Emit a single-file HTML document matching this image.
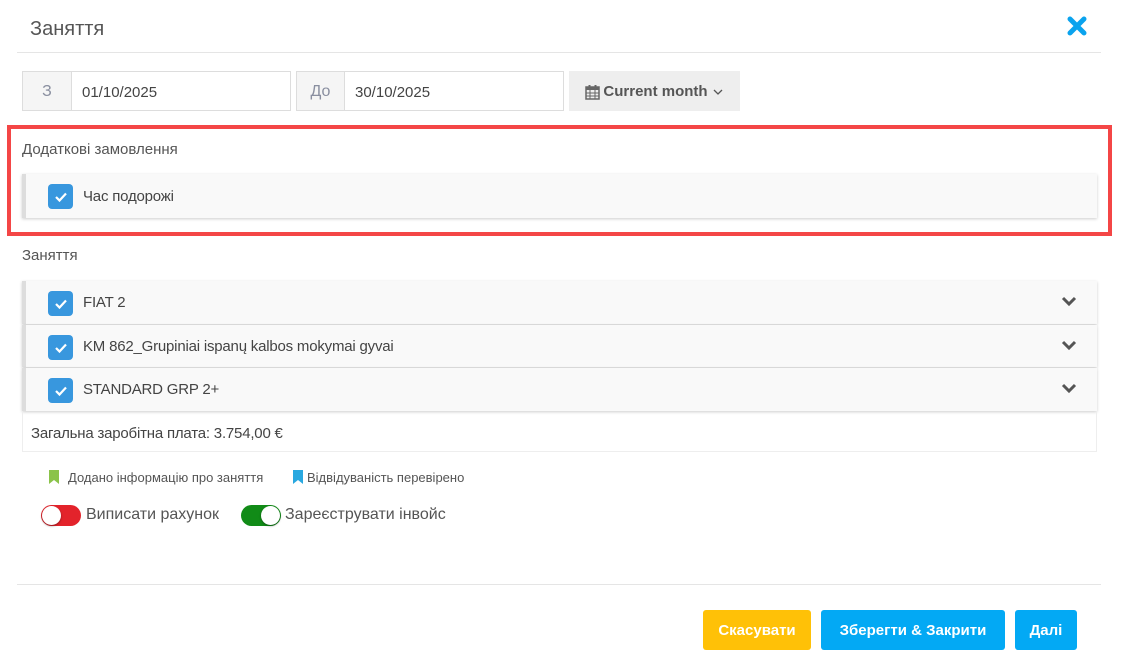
<!DOCTYPE html>
<html><head><meta charset="utf-8"><style>
*{box-sizing:border-box;margin:0;padding:0}
body{width:1121px;height:669px;background:#fff;font-family:"Liberation Sans",sans-serif;color:#555;position:relative;overflow:hidden}
.a{position:absolute}
.hr{position:absolute;left:17px;width:1084px;height:1px;background:#e5e5e5}
.addon{position:absolute;top:71px;height:40px;border:1px solid #ddd;background:#f5f5f5;color:#8a8fa0;font-size:16px;display:flex;align-items:center;justify-content:center;padding-top:2px}
.inp{position:absolute;top:71px;height:40px;border:1px solid #ddd;border-left:none;background:#fff;font-size:15px;color:#444;padding-left:10px;display:flex;align-items:center;padding-top:2px}
.panel{position:absolute;left:22px;width:1075px;background:#f9f9f9;border-left:4px solid #ddd;box-shadow:0 1px 3px rgba(0,0,0,.2);font-size:15px;color:#444}
.cb{position:absolute;left:22px;width:25px;height:25px;border-radius:4px;background:#3897de;display:flex;align-items:center;justify-content:center}
.lbl{position:absolute;left:57px;font-size:15px;color:#444;letter-spacing:-0.2px}
.chev{position:absolute;right:20px}
.btn{position:absolute;top:610px;height:40px;border-radius:3px;color:#fff;font-weight:bold;font-size:15px;display:flex;align-items:center;justify-content:center}
.tg{position:absolute;top:505px;width:40px;height:21px;border-radius:11px}
.tg i{position:absolute;top:1px;width:19px;height:19px;border-radius:50%;background:#fff;box-shadow:0 1px 2px rgba(0,0,0,.4)}
</style></head><body>
<div class="a" style="left:30px;top:18px;font-size:20px;color:#555">Заняття</div>
<svg class="a" style="left:1066px;top:15px" width="22" height="22" viewBox="0 0 22 22"><path d="M4 4L18 18M18 4L4 18" stroke="#0aa3ee" stroke-width="5" stroke-linecap="round"/></svg>
<div class="hr" style="top:52px"></div>

<div class="addon" style="left:22px;width:50px">З</div>
<div class="inp" style="left:72px;width:219px">01/10/2025</div>
<div class="addon" style="left:296px;width:49px">До</div>
<div class="inp" style="left:345px;width:219px">30/10/2025</div>
<div class="a" style="left:569px;top:71px;width:171px;height:40px;background:#eee;display:flex;align-items:center;justify-content:center;font-weight:bold;font-size:15px;color:#555;padding-top:1px">
<svg width="15" height="16" viewBox="0 0 15 16" style="margin-right:3px"><rect x="1" y="3" width="13" height="12" fill="none" stroke="#666" stroke-width="1.5"/><rect x="1" y="3" width="13" height="3" fill="#666"/><path d="M1 9h13M1 12h13M5 6v9M10 6v9" stroke="#666" stroke-width="1"/><rect x="3.5" y="1" width="2" height="4" fill="#666"/><rect x="9.5" y="1" width="2" height="4" fill="#666"/></svg>Current month<svg width="12" height="8" viewBox="0 0 12 8" style="margin-left:4px"><path d="M2 2l4 4 4-4" fill="none" stroke="#555" stroke-width="1.3"/></svg></div>

<div class="a" style="left:7px;top:125px;width:1105px;height:111px;border:4px solid #f44646"></div>
<div class="a" style="left:22px;top:141px;font-size:15px;color:#555">Додаткові замовлення</div>
<div class="panel" style="top:174px;height:44px">
<div class="cb" style="top:10px"><svg width="14" height="12" viewBox="0 0 14 12"><path d="M2 6l3.5 3.5L12 2.5" fill="none" stroke="#fff" stroke-width="2.2"/></svg></div>
<div class="lbl" style="top:14px">Час подорожі</div></div>

<div class="a" style="left:22px;top:247px;font-size:15px;color:#555">Заняття</div>
<div class="panel" style="top:281px;height:43px">
<div class="cb" style="top:10px"><svg width="14" height="12" viewBox="0 0 14 12"><path d="M2 6l3.5 3.5L12 2.5" fill="none" stroke="#fff" stroke-width="2.2"/></svg></div>
<div class="lbl" style="top:13px">FIAT 2</div>
<svg class="chev" style="top:15px" width="16" height="11" viewBox="0 0 16 11"><path d="M2 2l6 6 6-6" fill="none" stroke="#555" stroke-width="3"/></svg></div>
<div class="panel" style="top:325px;height:42px">
<div class="cb" style="top:10px"><svg width="14" height="12" viewBox="0 0 14 12"><path d="M2 6l3.5 3.5L12 2.5" fill="none" stroke="#fff" stroke-width="2.2"/></svg></div>
<div class="lbl" style="top:13px">KM 862_Grupiniai ispanų kalbos mokymai gyvai</div>
<svg class="chev" style="top:15px" width="16" height="11" viewBox="0 0 16 11"><path d="M2 2l6 6 6-6" fill="none" stroke="#555" stroke-width="3"/></svg></div>
<div class="panel" style="top:368px;height:43px">
<div class="cb" style="top:10px"><svg width="14" height="12" viewBox="0 0 14 12"><path d="M2 6l3.5 3.5L12 2.5" fill="none" stroke="#fff" stroke-width="2.2"/></svg></div>
<div class="lbl" style="top:13px">STANDARD GRP 2+</div>
<svg class="chev" style="top:15px" width="16" height="11" viewBox="0 0 16 11"><path d="M2 2l6 6 6-6" fill="none" stroke="#555" stroke-width="3"/></svg></div>

<div class="a" style="left:22px;top:412px;width:1075px;height:40px;border:1px solid #eee;border-top:none;font-size:15px;color:#444;padding:13px 0 0 8px;letter-spacing:-0.2px">Загальна заробітна плата: 3.754,00 €</div>

<svg class="a" style="left:48px;top:469px" width="12" height="16" viewBox="0 0 12 16"><path d="M1 1h10v14l-5-4-5 4z" fill="#8bc34a"/></svg>
<div class="a" style="left:68px;top:470px;font-size:13px;color:#555">Додано інформацію про заняття</div>
<svg class="a" style="left:292px;top:469px" width="12" height="16" viewBox="0 0 12 16"><path d="M1 1h10v14l-5-4-5 4z" fill="#29a8e0"/></svg>
<div class="a" style="left:307px;top:470px;font-size:13px;color:#555">Відвідуваність перевірено</div>

<div class="tg" style="left:41px;background:#e3232b"><i style="left:1px"></i></div>
<div class="a" style="left:86px;top:506px;font-size:16px;color:#555">Виписати рахунок</div>
<div class="tg" style="left:241px;background:#118b17"><i style="right:1px"></i></div>
<div class="a" style="left:285px;top:506px;font-size:16px;color:#555">Зареєструвати інвойс</div>

<div class="hr" style="top:584px"></div>
<div class="btn" style="left:703px;width:108px;background:#ffc107">Скасувати</div>
<div class="btn" style="left:821px;width:184px;background:#03a9f4">Зберегти &amp; Закрити</div>
<div class="btn" style="left:1015px;width:62px;background:#03a9f4">Далі</div>
</body></html>
